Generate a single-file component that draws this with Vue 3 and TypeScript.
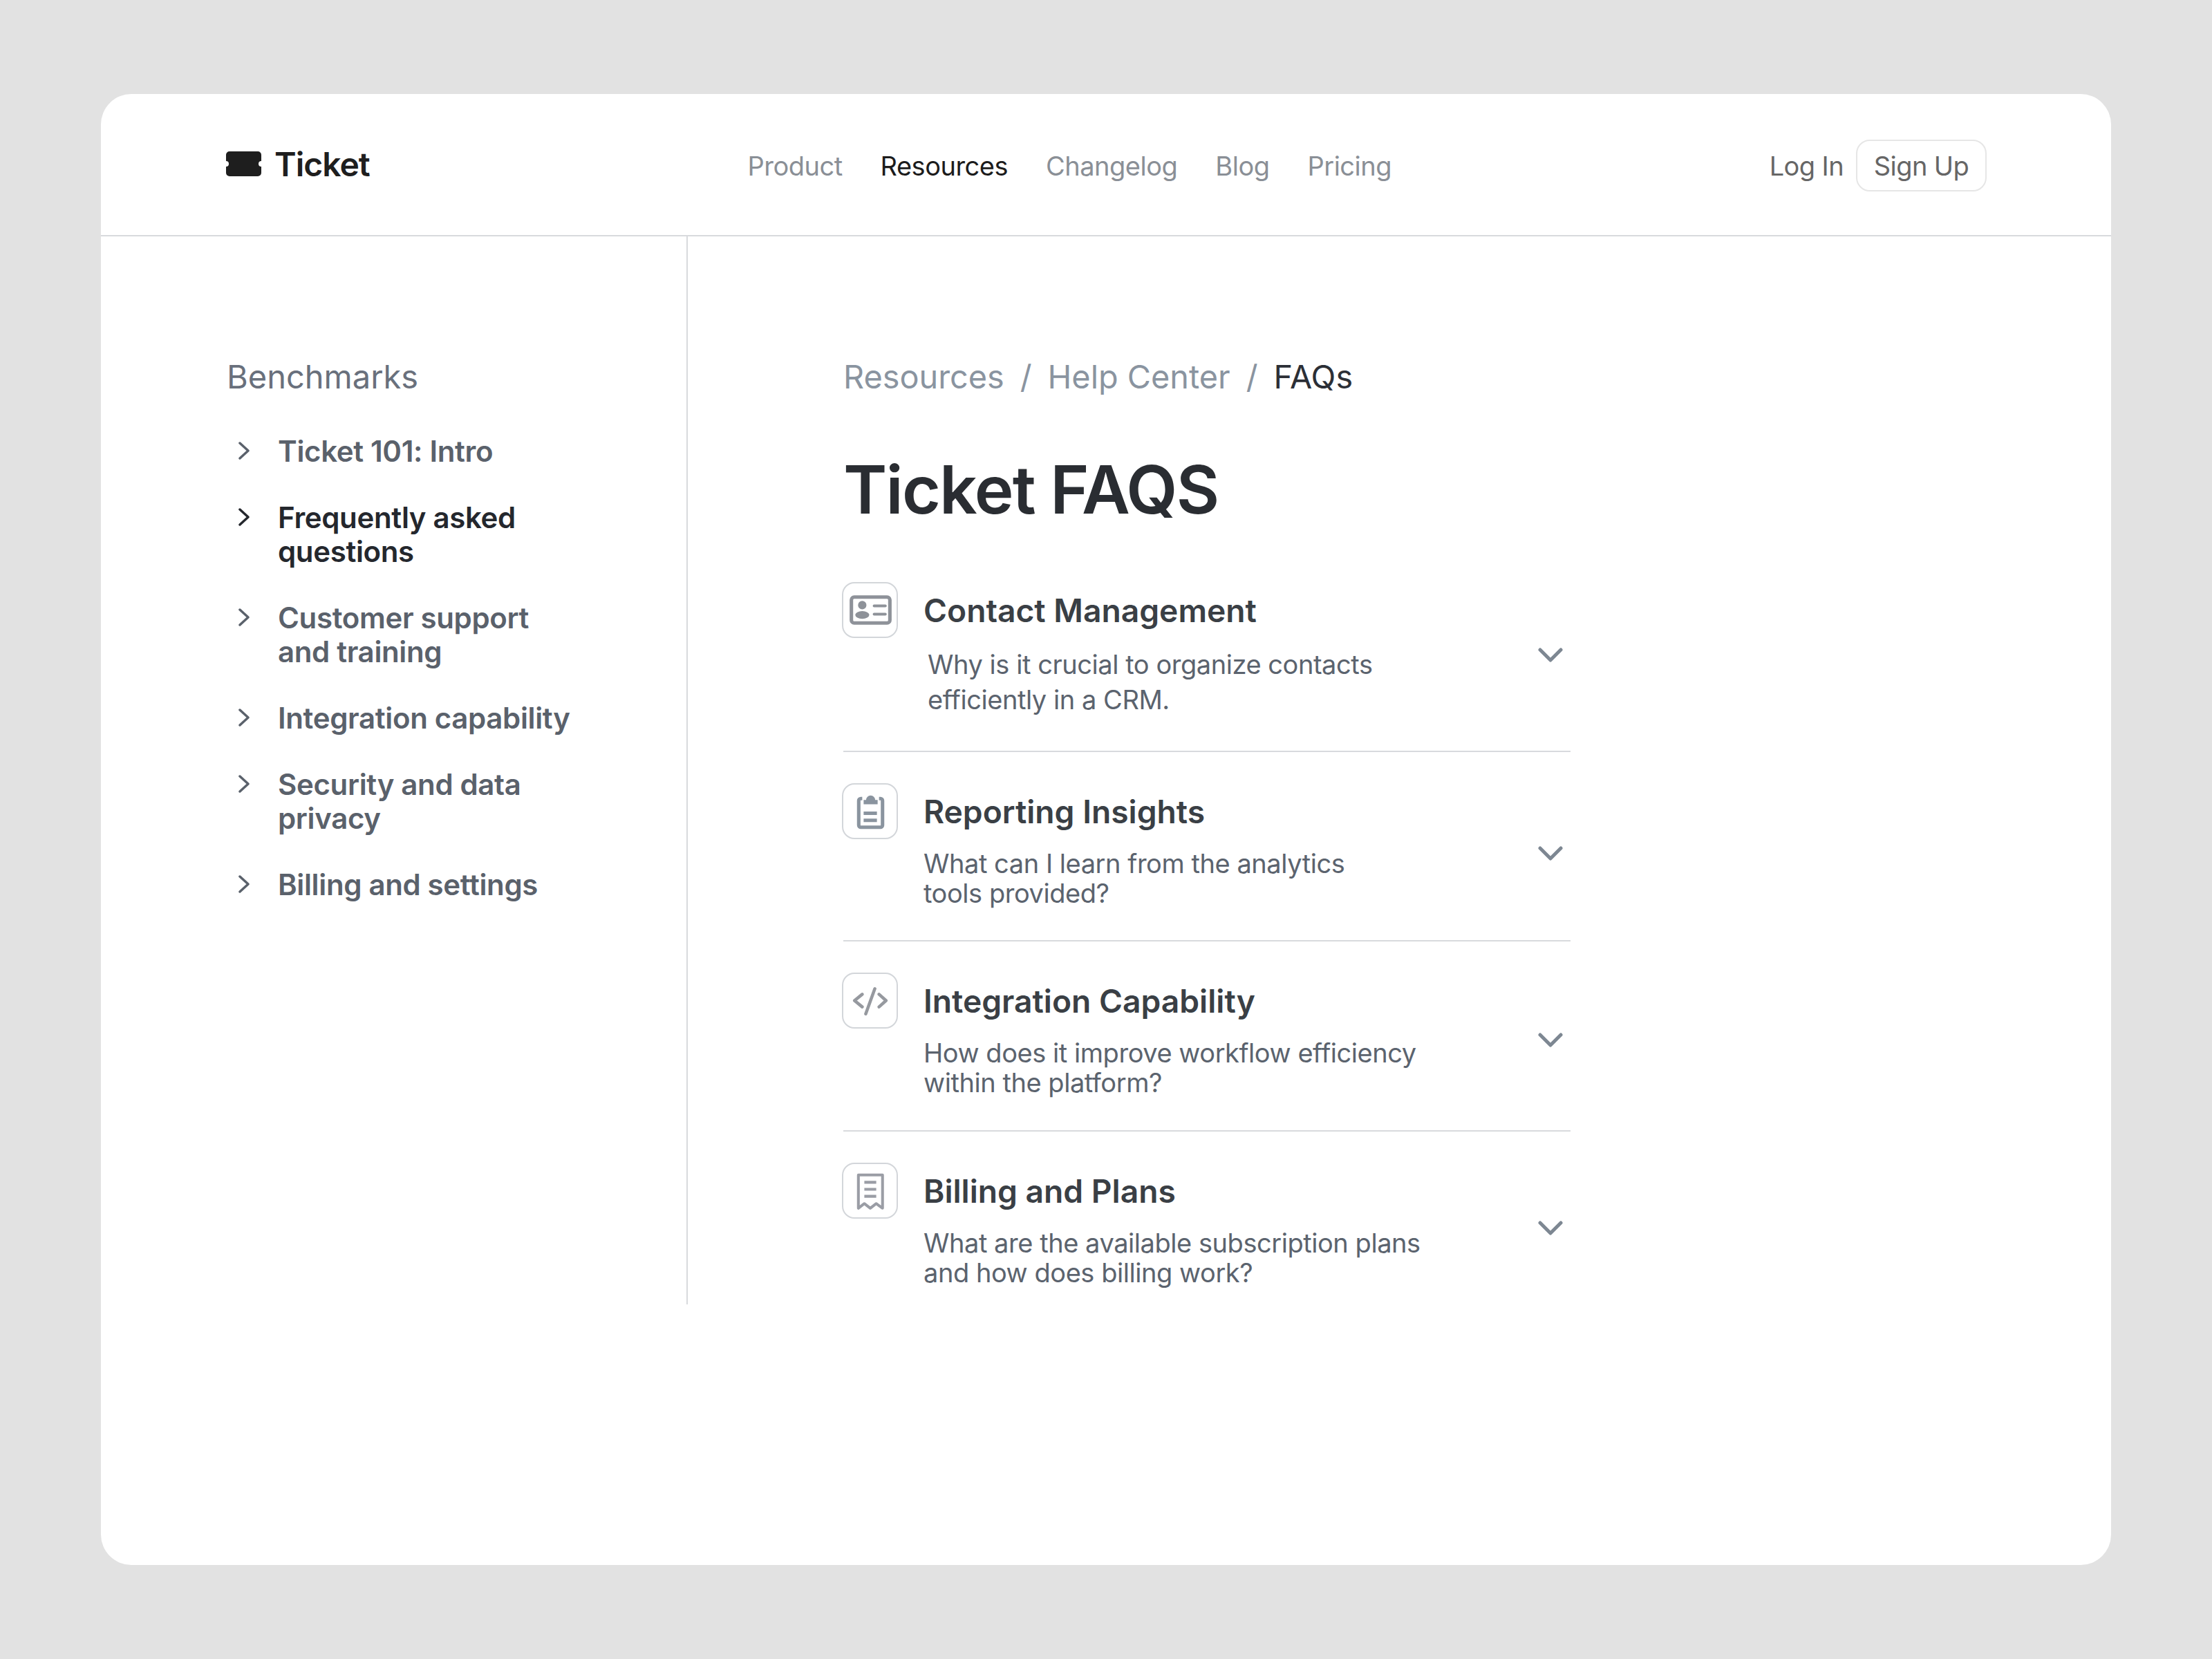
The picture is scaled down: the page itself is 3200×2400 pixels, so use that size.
<script setup lang="ts">
interface Faq {
  icon: 'card' | 'clipboard' | 'code' | 'receipt'
  title: string
  lines: string[]
}

const navLinks = ['Product', 'Resources', 'Changelog', 'Blog', 'Pricing']

const topics = [
  { label: 'Ticket 101: Intro' },
  { label: 'Frequently asked questions', active: true },
  { label: 'Customer support and training' },
  { label: 'Integration capability' },
  { label: 'Security and data privacy' },
  { label: 'Billing and settings' },
]

const faqs: Faq[] = [
  {
    icon: 'card',
    title: 'Contact Management',
    lines: ['Why is it crucial to organize contacts', 'efficiently in a CRM.'],
  },
  {
    icon: 'clipboard',
    title: 'Reporting Insights',
    lines: ['What can I learn from the analytics', 'tools provided?'],
  },
  {
    icon: 'code',
    title: 'Integration Capability',
    lines: ['How does it improve workflow efficiency', 'within the platform?'],
  },
  {
    icon: 'receipt',
    title: 'Billing and Plans',
    lines: ['What are the available subscription plans', 'and how does billing work?'],
  },
]
</script>

<template>
  <div class="page">
    <div class="card">
      <header class="topbar">
        <a class="logo">
          <svg class="logo-mark" viewBox="0 0 53 36">
            <path d="M6 0H47a5 5 0 0 1 5 5V14a4 4 0 0 0 0 8V31a5 5 0 0 1-5 5H6a5 5 0 0 1-5-5V22a4 4 0 0 0 0-8V5a5 5 0 0 1 5-5Z" fill="#1e1e1e" />
          </svg>
          <span>Ticket</span>
        </a>
        <nav class="nav">
          <a v-for="link in navLinks" :key="link" :class="{ current: link === 'Resources' }">{{ link }}</a>
        </nav>
        <div class="auth">
          <a class="login">Log In</a>
          <button class="signup">Sign Up</button>
        </div>
      </header>

      <div class="columns">
        <aside class="sidebar">
          <h3 class="sidebar-title">Benchmarks</h3>
          <ul class="topics">
            <li v-for="topic in topics" :key="topic.label" class="topic" :class="{ active: topic.active }">
              <svg class="topic-arrow" viewBox="0 0 16 26">
                <path d="M2 2L14 13L2 24" />
              </svg>
              <span>{{ topic.label }}</span>
            </li>
          </ul>
        </aside>

        <main class="content">
          <div class="crumbs">
            <span>Resources</span>
            <span>/</span>
            <span>Help Center</span>
            <span>/</span>
            <span class="crumb-current">FAQs</span>
          </div>
          <h1 class="heading">Ticket FAQS</h1>

          <div class="faq-list">
            <div v-for="(faq, i) in faqs" :key="faq.title" class="faq-row">
              <div class="faq-icon">
                <svg v-if="faq.icon === 'card'" viewBox="0 0 80 80">
                  <rect x="13.500" y="21.500" width="55" height="37" rx="4" fill="none" stroke="#8e9299" stroke-width="5" />
                  <circle cx="29" cy="33" r="6" fill="#8e9299" />
                  <ellipse cx="29" cy="47" rx="10" ry="5.5" fill="#8e9299" />
                  <path d="M46 34H62M46 46H62" stroke="#8e9299" stroke-width="4" stroke-linecap="round" />
                </svg>
                <svg v-else-if="faq.icon === 'clipboard'" viewBox="0 0 80 80">
                  <path d="M29 22H27a3 3 0 0 0-3 3V60a3 3 0 0 0 3 3H55a3 3 0 0 0 3-3V25a3 3 0 0 0-3-3H53" fill="none" stroke="#8a949f" stroke-width="5" />
                  <path d="M31 30V24H34.500a6.500 6.500 0 0 1 13 0H51V30Z" fill="#8a949f" />
                  <path d="M31 43H50M31 53H50" stroke="#8a949f" stroke-width="5" />
                </svg>
                <svg v-else-if="faq.icon === 'code'" viewBox="0 0 80 80">
                  <path d="M29 31L18 40L29 49M53 31L63 40L53 49M47 23L34 59" fill="none" stroke="#96999f" stroke-width="4.5" stroke-linecap="round" stroke-linejoin="round" />
                </svg>
                <svg v-else viewBox="0 0 80 80">
                  <path d="M23.5 65V17.5H58V65L49 58.500L40.500 65L32 58.500Z" fill="none" stroke="#9a9da5" stroke-width="4" stroke-linejoin="round" />
                  <path d="M32 28H49M32 38H49M32 48H49" stroke="#9a9da5" stroke-width="4" />
                </svg>
              </div>
              <div class="faq-text">
                <h4 class="faq-title">{{ faq.title }}</h4>
                <p class="faq-desc" :class="{ loose: i === 0 }">
                  <span v-for="line in faq.lines" :key="line">{{ line }}</span>
                </p>
              </div>
              <svg class="faq-chevron" viewBox="0 0 36 22">
                <path d="M3 3L18 18L33 3" />
              </svg>
            </div>
          </div>
        </main>
      </div>
    </div>
  </div>
</template>

<style>
body {
  background: #e2e2e2;
}
</style>

<style scoped>
.page {
  width: 3200px;
  height: 2400px;
  padding: 136px 146px 136px;
  box-sizing: border-box;
  background: #e2e2e2;
  font-family: Inter, "Liberation Sans", sans-serif;
}

.card {
  height: 100%;
  background: #ffffff;
  border-radius: 44px;
  overflow: hidden;
}

.topbar {
  display: flex;
  align-items: center;
  justify-content: space-between;
  height: 201px;
  padding: 3px 180px 0;
  border-bottom: 2px solid #d8dadd;
}

.logo {
  display: flex;
  align-items: center;
  gap: 18px;
  margin-top: -5px;
  font-size: 48px;
  font-weight: 600;
  letter-spacing: -1px;
  color: #1e1e1e;
}

.logo-mark {
  width: 53px;
  height: 36px;
}

.nav {
  display: flex;
  gap: 55px;
  font-size: 38px;
  letter-spacing: -0.5px;
  color: #8a8f96;
}

.nav .current {
  color: #1c1c1c;
}

.auth {
  display: flex;
  align-items: center;
  gap: 18px;
  font-size: 38px;
  letter-spacing: -0.6px;
  color: #666666;
}

.signup {
  width: 189px;
  height: 75px;
  background: #ffffff;
  border: 2px solid #e6e6e6;
  border-radius: 20px;
  font: inherit;
  letter-spacing: inherit;
  color: inherit;
}

.columns {
  display: grid;
  grid-template-columns: 849px 1fr;
  align-items: start;
}

.sidebar {
  height: 1545px;
  padding: 174px 0 0 182px;
  box-sizing: border-box;
  border-right: 2px solid #d8dadd;
}

.sidebar-title {
  margin: 0 0 54px;
  font-size: 47px;
  line-height: 58px;
  font-weight: 400;
  color: #69707c;
}

.topics {
  display: flex;
  flex-direction: column;
  gap: 47px;
  margin: 0;
  padding: 0;
  list-style: none;
}

.topic {
  display: flex;
  align-items: flex-start;
  gap: 41px;
  padding-left: 17px;
  max-width: 490px;
  font-size: 42px;
  line-height: 49px;
  font-weight: 600;
  letter-spacing: -0.35px;
  color: #5a616b;
}

.topic.active {
  color: #24272d;
}

.topic-arrow {
  flex: none;
  width: 16px;
  height: 26px;
  margin-top: 11px;
  fill: none;
  stroke: currentColor;
  stroke-width: 3.5;
  stroke-linecap: round;
  stroke-linejoin: round;
}

.content {
  padding: 174px 0 0 225px;
}

.crumbs {
  display: flex;
  gap: 23px;
  font-size: 46.800px;
  line-height: 58px;
  color: #8a94a0;
}

.crumb-current {
  color: #2c2f36;
}

.heading {
  margin: 74px 0;
  font-size: 96px;
  line-height: 120px;
  font-weight: 600;
  letter-spacing: -1.8px;
  color: #2a2d32;
}

.faq-list {
  width: 1052px;
}

.faq-row {
  display: flex;
  align-items: flex-start;
  gap: 37px;
  padding: 45px 0 46.500px;
  border-bottom: 2px solid #d8dadd;
}

.faq-row:first-child {
  padding-top: 0;
}

.faq-row:last-child {
  padding-bottom: 0;
  border-bottom: none;
}

.faq-icon {
  flex: none;
  width: 81px;
  height: 81px;
  margin-left: -2px;
  box-sizing: border-box;
  border: 2px solid #d3d6da;
  border-radius: 18px;
}

.faq-icon svg {
  display: block;
  width: 81px;
  height: 81px;
  margin: -2px;
}

.faq-text {
  flex: 1;
}

.faq-title {
  margin: 0;
  font-size: 46.200px;
  line-height: 82px;
  font-weight: 600;
  color: #3a3f45;
}

.faq-desc {
  margin: 13px 0 0;
  font-size: 38px;
  line-height: 43px;
  letter-spacing: -0.45px;
  color: #5b636e;
}

.faq-desc span {
  display: block;
}

.faq-desc.loose {
  margin: 12px 0 2px 6px;
  line-height: 50.500px;
}

.faq-chevron {
  flex: none;
  align-self: center;
  width: 36px;
  height: 22px;
  margin: 14px 11px 0 0;
  fill: none;
  stroke: #7d8792;
  stroke-width: 5;
  stroke-linecap: round;
  stroke-linejoin: round;
}

.faq-row:nth-child(2) .faq-chevron {
  margin-top: 24px;
}

.faq-row:last-child .faq-chevron {
  margin-top: 10px;
}
</style>
